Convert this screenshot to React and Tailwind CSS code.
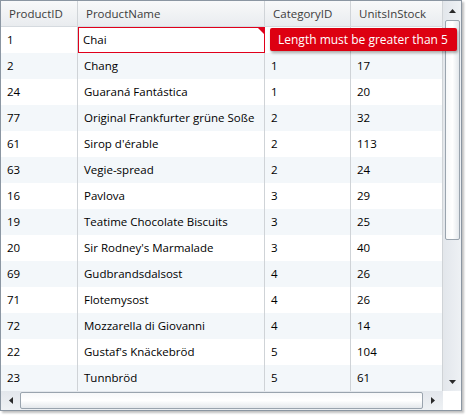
import React from "react";

const rows = [
  ["1", "Chai", "1", "39"],
  ["2", "Chang", "1", "17"],
  ["24", "Guaraná Fantástica", "1", "20"],
  ["77", "Original Frankfurter grüne Soße", "2", "32"],
  ["61", "Sirop d'érable", "2", "113"],
  ["63", "Vegie-spread", "2", "24"],
  ["16", "Pavlova", "3", "29"],
  ["19", "Teatime Chocolate Biscuits", "3", "25"],
  ["20", "Sir Rodney's Marmalade", "3", "40"],
  ["69", "Gudbrandsdalsost", "4", "26"],
  ["71", "Flotemysost", "4", "26"],
  ["72", "Mozzarella di Giovanni", "4", "14"],
  ["22", "Gustaf's Knäckebröd", "5", "104"],
  ["23", "Tunnbröd", "5", "61"],
];

const cols = ["w-[77px]", "w-[187px]", "w-[86px]", "w-[92px]"];

const Arrow = ({ dir }) => {
  const pts = {
    up: "0,4 3.5,0 7,4",
    down: "0,0 3.5,4 7,0",
    left: "4,0 0,3.5 4,7",
    right: "0,0 4,3.5 0,7",
  }[dir];
  const w = dir === "up" || dir === "down" ? 7 : 4;
  const h = dir === "up" || dir === "down" ? 4 : 7;
  return (
    <svg width={w} height={h} viewBox={`0 0 ${w} ${h}`}>
      <polygon points={pts} fill="#2a2a2a" />
    </svg>
  );
};

export default function App() {
  return (
    <div className="w-[470px] h-[418px] bg-white font-['Open_Sans',sans-serif] whitespace-nowrap">
      <div className="w-[462px] h-[411px] border border-[#8b96a2] shadow-[2px_2px_2px_rgba(0,0,0,0.25)] flex flex-col bg-white">
        <div className="flex h-[390px]">
          <div className="w-[442px] flex flex-col relative">
            <div className="flex h-[26px] bg-gradient-to-b from-[#f8f9fa] to-[#e9ecef] border-b border-[#d5dadf] text-[11.5px] text-[#3c3c3c]">
              {["ProductID", "ProductName", "CategoryID", "UnitsInStock"].map((h, i) => (
                <div key={h} className={`${cols[i]} pl-[8px] flex items-center border-r border-[#d0d4d8] shrink-0`}>
                  {h}
                </div>
              ))}
            </div>
            {rows.map((r, ri) => (
              <div key={ri} className={`flex h-[26px] text-[11.5px] text-black ${ri % 2 ? "bg-[#f3f7fa]" : "bg-white"}`}>
                {r.map((c, ci) => {
                  if (ri === 0 && ci === 1) {
                    return (
                      <div key={ci} className={`${cols[ci]} shrink-0 relative border border-[#e0001b] pl-[4px] flex items-center bg-white`}>
                        Chai
                        <div className="absolute top-0 right-0 w-0 h-0 border-t-[6px] border-t-[#e0001b] border-l-[6px] border-l-transparent" />
                      </div>
                    );
                  }
                  return (
                    <div key={ci} className={`${cols[ci]} shrink-0 pl-[6px] flex items-center border-r border-[#cfd3d7]`}>
                      {ri === 0 && ci >= 2 ? "" : c}
                    </div>
                  );
                })}
              </div>
            ))}
            <div className="absolute left-[269px] top-[27px] w-[187px] h-[23px] bg-[#dd0011] text-white text-[12px] flex items-center pl-[8px] rounded-[2px] shadow-[1px_2px_3px_rgba(0,0,0,0.35)] z-10">
              Length must be greater than 5
            </div>
          </div>
          <div className="w-[18px] flex flex-col bg-gradient-to-r from-[#e3e7ec] to-[#eef1f4] border-l border-[#e4e7ea]">
            <div className="h-[19px] flex items-center justify-center">
              <Arrow dir="up" />
            </div>
            <div className="h-[220px] mx-[1px] rounded-[2px] border border-[#9aa4ae] bg-gradient-to-r from-[#f7f8f9] via-[#ffffff] to-[#e4e8ec]" />
            <div className="flex-1" />
            <div className="h-[19px] flex items-center justify-center">
              <Arrow dir="down" />
            </div>
          </div>
        </div>
        <div className="flex h-[19px]">
          <div className="w-[442px] flex bg-gradient-to-b from-[#e3e7ec] to-[#eef1f4]">
            <div className="w-[19px] flex items-center justify-center">
              <Arrow dir="left" />
            </div>
            <div className="w-[403px] my-[1px] rounded-[2px] border border-[#9aa4ae] bg-gradient-to-b from-[#f7f8f9] via-[#ffffff] to-[#e4e8ec]" />
            <div className="flex-1 flex items-center justify-center">
              <Arrow dir="right" />
            </div>
          </div>
          <div className="flex-1 bg-white" />
        </div>
      </div>
    </div>
  );
}
